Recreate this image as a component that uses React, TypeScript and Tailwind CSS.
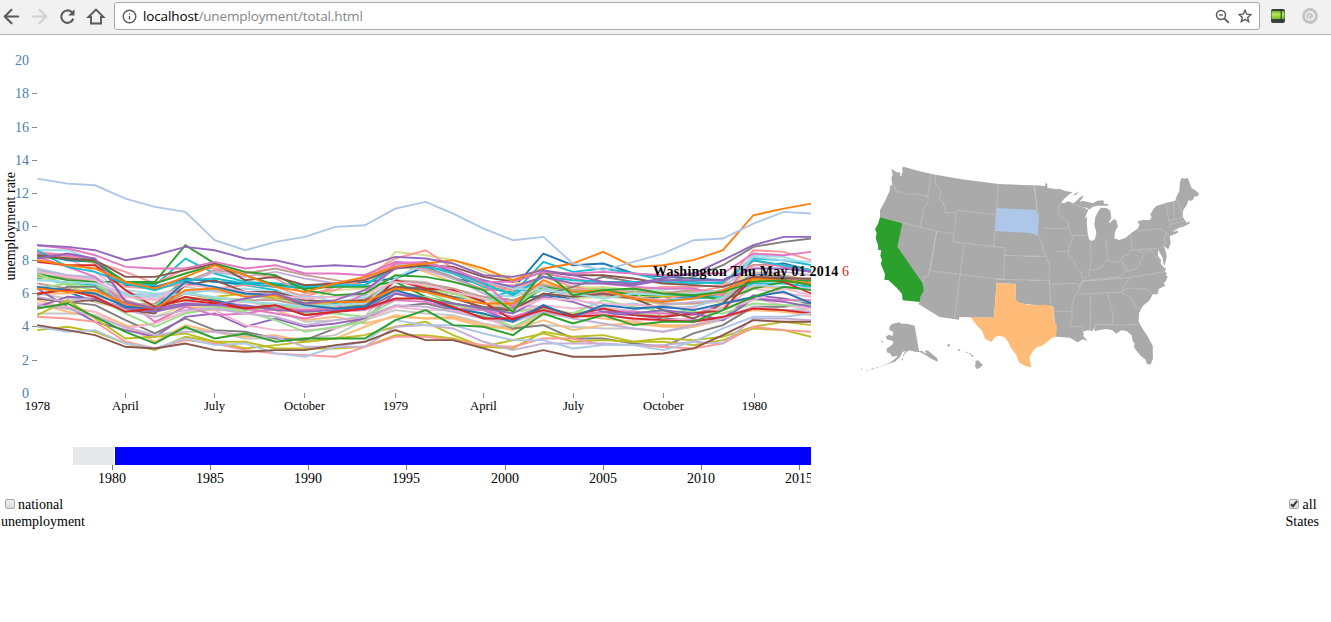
import { ArrowLeft, ArrowRight, Info } from "lucide-react";

type Series = [string, number[]];

const series: Series[] = [
  ["#f7b6d2", [8.1, 8.1, 7.3, 5.9, 5.7, 5.5, 5.3, 5.5, 5.2, 5.1, 5.2, 5.5, 6.1, 5.8, 5.3, 5.2, 4.9, 5.3, 5.1, 5.2, 4.9, 4.6, 4.8, 5.2, 6.3, 6.0, 5.8]],
  ["#1f77b4", [6.4, 6.1, 5.5, 5.1, 5.2, 5.7, 5.6, 5.2, 5.2, 5.3, 5.1, 5.2, 6.4, 6.3, 6.0, 5.8, 5.6, 5.9, 5.7, 5.9, 5.7, 5.8, 5.8, 5.9, 7.2, 7.0, 6.7]],
  ["#c7c7c7", [6.0, 5.7, 5.6, 5.2, 5.0, 5.2, 5.1, 5.1, 5.0, 4.3, 4.4, 4.6, 6.8, 6.7, 6.1, 5.8, 5.5, 6.2, 6.0, 6.1, 6.2, 6.0, 6.3, 5.9, 6.9, 6.8, 6.6]],
  ["#ffbb78", [6.0, 6.0, 6.1, 5.2, 5.1, 6.2, 6.3, 6.1, 5.8, 5.3, 5.4, 5.5, 7.8, 7.3, 6.7, 6.3, 6.1, 6.6, 6.3, 6.2, 6.1, 5.8, 6.0, 5.9, 6.4, 6.3, 6.3]],
  ["#17becf", [6.9, 6.6, 6.5, 5.3, 5.3, 6.9, 6.7, 6.5, 6.2, 5.5, 5.4, 5.3, 6.3, 6.1, 5.8, 5.6, 6.2, 6.2, 6.0, 5.8, 5.8, 5.6, 5.7, 5.8, 6.6, 6.6, 6.4]],
  ["#c7c7c7", [7.5, 6.8, 6.6, 6.0, 5.9, 6.4, 6.1, 5.9, 5.6, 5.2, 5.3, 5.7, 6.7, 6.4, 6.1, 5.8, 5.9, 6.4, 6.3, 6.1, 6.0, 6.1, 6.1, 6.0, 6.8, 6.8, 6.5]],
  ["#c7c7c7", [4.8, 4.8, 4.7, 3.9, 3.4, 3.9, 3.7, 3.3, 3.3, 3.3, 3.5, 4.4, 5.0, 4.8, 4.7, 4.2, 3.9, 4.1, 4.0, 3.9, 3.9, 3.7, 4.0, 4.4, 5.2, 5.0, 5.1]],
  ["#ffbb78", [5.6, 5.1, 4.9, 4.1, 3.1, 4.1, 3.7, 3.4, 3.5, 3.1, 3.3, 4.0, 4.7, 4.5, 4.6, 4.1, 3.8, 4.4, 3.8, 4.1, 4.2, 4.0, 4.0, 4.5, 5.2, 4.9, 4.7]],
  ["#ffbb78", [5.4, 4.9, 4.6, 4.0, 4.2, 5.2, 5.0, 5.0, 5.0, 4.4, 4.6, 4.2, 4.6, 4.5, 4.5, 4.0, 3.9, 4.7, 4.7, 4.5, 4.3, 4.1, 4.1, 4.6, 5.0, 4.9, 4.9]],
  ["#7f7f7f", [5.7, 5.5, 5.3, 4.4, 3.6, 4.5, 3.8, 3.7, 3.3, 3.2, 3.9, 4.5, 5.2, 5.4, 5.0, 4.6, 3.9, 4.1, 3.3, 3.3, 3.0, 2.8, 3.6, 4.1, 5.2, 5.2, 5.4]],
  ["#9467bd", [6.3, 5.2, 4.3, 3.8, 3.4, 4.6, 4.8, 4.0, 4.5, 4.0, 4.2, 4.5, 6.0, 5.7, 5.3, 5.0, 4.3, 5.1, 4.7, 4.8, 4.7, 4.5, 4.4, 4.5, 5.9, 5.7, 5.4]],
  ["#f7b6d2", [5.4, 5.2, 4.9, 3.9, 4.2, 4.9, 5.0, 4.1, 3.8, 3.8, 3.9, 4.4, 5.2, 5.0, 5.0, 4.5, 4.0, 4.8, 4.6, 4.8, 4.4, 4.4, 4.5, 5.0, 5.7, 5.3, 5.1]],
  ["#98df8a", [7.3, 6.5, 5.8, 4.8, 4.0, 4.8, 5.1, 4.9, 4.4, 3.7, 4.0, 4.3, 6.4, 6.1, 5.4, 4.7, 4.0, 4.9, 4.8, 5.6, 5.2, 4.9, 4.9, 4.8, 5.4, 5.3, 5.3]],
  ["#9edae5", [8.6, 8.6, 8.0, 6.2, 6.0, 6.0, 6.2, 6.3, 6.1, 5.9, 5.5, 5.8, 7.7, 7.8, 7.0, 6.0, 5.8, 6.4, 6.3, 5.9, 6.3, 6.2, 6.4, 6.5, 8.3, 8.2, 7.7]],
  ["#1f77b4", [8.4, 8.0, 7.9, 6.5, 6.4, 6.9, 6.7, 6.6, 6.6, 6.3, 6.5, 6.7, 6.9, 7.6, 6.9, 6.6, 6.3, 8.4, 7.7, 7.8, 7.2, 7.0, 6.9, 6.8, 7.7, 7.8, 7.4]],
  ["#17becf", [8.4, 8.2, 8.0, 6.6, 6.5, 8.1, 7.2, 6.7, 6.6, 6.5, 6.5, 6.5, 7.9, 7.7, 7.2, 6.4, 6.0, 7.9, 7.3, 7.5, 7.2, 6.8, 6.7, 6.6, 8.1, 8.0, 7.7]],
  ["#bcbd22", [7.0, 7.0, 6.6, 5.5, 5.2, 5.7, 5.8, 6.0, 5.7, 5.5, 5.2, 5.4, 6.2, 6.2, 6.0, 5.7, 5.2, 6.4, 6.4, 6.3, 5.9, 5.8, 5.9, 6.0, 6.8, 6.7, 6.6]],
  ["#dbdb8d", [6.8, 7.0, 6.7, 5.5, 5.1, 5.7, 5.8, 5.6, 5.6, 5.5, 6.2, 6.3, 8.5, 8.3, 8.0, 7.3, 6.7, 6.3, 5.7, 5.8, 5.7, 5.3, 5.4, 5.5, 8.0, 7.6, 7.3]],
  ["#dbdb8d", [7.1, 6.8, 5.5, 5.0, 4.6, 5.3, 5.2, 5.0, 5.1, 5.0, 5.2, 5.3, 6.3, 6.2, 6.0, 5.4, 5.1, 6.5, 6.3, 6.4, 6.2, 6.1, 6.0, 6.2, 7.3, 7.1, 6.8]],
  ["#c49c94", [6.6, 6.3, 5.9, 5.3, 5.4, 6.7, 7.4, 7.2, 7.5, 7.1, 6.8, 6.5, 7.6, 7.5, 7.0, 6.2, 6.3, 6.5, 6.2, 6.2, 6.1, 6.0, 6.2, 6.1, 7.1, 6.9, 6.8]],
  ["#c49c94", [7.1, 6.9, 6.7, 5.6, 5.1, 6.0, 5.7, 5.6, 5.6, 5.3, 5.5, 5.6, 6.8, 6.6, 6.3, 5.8, 5.6, 6.3, 6.0, 5.9, 5.7, 5.4, 5.4, 5.6, 7.0, 7.1, 6.7]],
  ["#ff9896", [8.4, 8.2, 7.9, 7.3, 6.6, 7.5, 7.5, 7.3, 6.9, 6.0, 6.2, 6.9, 7.8, 7.8, 7.3, 6.5, 6.5, 6.4, 5.9, 6.1, 5.8, 5.6, 6.1, 6.4, 7.7, 7.7, 7.4]],
  ["#ff9896", [8.5, 8.3, 7.8, 6.4, 6.3, 6.6, 6.3, 6.5, 6.4, 5.8, 6.4, 7.0, 8.1, 8.6, 7.5, 6.6, 6.2, 7.0, 6.4, 6.1, 6.2, 6.4, 6.4, 6.5, 8.6, 8.5, 8.0]],
  ["#2ca02c", [7.2, 6.8, 6.7, 6.7, 6.6, 7.2, 7.7, 7.1, 6.5, 6.3, 6.4, 6.4, 6.7, 5.8, 5.4, 5.1, 5.0, 6.4, 6.1, 6.2, 5.9, 5.9, 5.9, 5.6, 6.3, 6.7, 6.8]],
  ["#98df8a", [7.2, 6.5, 6.2, 5.9, 5.3, 6.1, 5.7, 5.6, 5.2, 5.2, 5.5, 5.1, 6.8, 6.4, 6.0, 5.7, 5.4, 6.3, 6.1, 6.3, 6.2, 4.5, 5.2, 5.8, 7.0, 6.8, 6.6]],
  ["#98df8a", [6.3, 6.6, 6.4, 6.0, 5.2, 5.4, 5.2, 5.0, 5.2, 4.8, 4.8, 4.6, 5.6, 5.8, 5.3, 5.0, 4.9, 5.1, 4.8, 5.1, 4.8, 4.6, 4.8, 5.1, 5.6, 5.6, 5.5]],
  ["#aec7e8", [7.5, 7.1, 7.0, 6.0, 5.9, 6.1, 6.2, 6.0, 5.9, 5.8, 5.8, 5.9, 7.6, 7.7, 7.3, 6.7, 6.4, 6.4, 5.7, 5.2, 5.4, 5.1, 5.2, 5.7, 6.5, 6.4, 6.3]],
  ["#c5b0d5", [7.4, 7.1, 6.9, 5.2, 5.0, 6.6, 7.3, 7.0, 7.3, 6.9, 6.6, 6.8, 7.7, 7.4, 6.9, 6.0, 5.3, 5.2, 4.6, 4.9, 5.0, 5.3, 5.5, 5.6, 7.2, 7.3, 7.1]],
  ["#7f7f7f", [5.9, 6.4, 6.4, 5.2, 5.0, 5.3, 5.3, 5.2, 5.1, 5.0, 5.1, 5.3, 6.3, 6.3, 5.7, 5.2, 5.1, 5.9, 6.4, 7.0, 6.7, 6.7, 7.0, 7.7, 8.8, 9.1, 9.3]],
  ["#e377c2", [8.2, 7.6, 7.0, 5.3, 5.1, 5.3, 5.3, 5.1, 4.8, 4.5, 4.9, 5.0, 5.6, 5.5, 5.1, 5.0, 4.6, 5.2, 4.7, 4.9, 4.9, 4.8, 4.7, 5.4, 5.7, 5.6, 5.6]],
  ["#e377c2", [8.4, 8.3, 8.1, 5.6, 4.3, 5.2, 4.7, 4.8, 5.1, 5.0, 5.1, 6.0, 7.8, 7.9, 7.4, 6.6, 5.2, 7.2, 6.9, 6.6, 6.4, 6.3, 6.3, 5.9, 8.0, 7.6, 7.3]],
  ["#d62728", [7.9, 7.7, 7.7, 6.2, 5.2, 5.6, 5.4, 5.1, 5.3, 4.7, 4.9, 5.1, 6.8, 6.3, 6.2, 5.5, 4.4, 5.2, 4.7, 5.1, 4.7, 4.6, 4.8, 5.0, 7.0, 6.7, 6.0]],
  ["#8c564b", [5.7, 5.5, 5.6, 5.0, 4.8, 6.5, 6.8, 6.1, 6.1, 5.6, 5.5, 5.6, 6.4, 6.2, 5.8, 5.1, 5.0, 6.0, 5.8, 6.0, 5.7, 5.0, 4.5, 5.4, 7.0, 6.8, 6.5]],
  ["#9467bd", [5.2, 5.8, 5.7, 5.1, 4.9, 5.3, 5.3, 5.3, 5.0, 4.9, 5.0, 5.1, 6.0, 5.6, 5.4, 5.1, 4.8, 5.8, 5.5, 4.9, 4.8, 5.0, 4.8, 4.4, 5.7, 5.5, 5.2]],
  ["#c5b0d5", [5.8, 5.5, 5.8, 5.0, 4.6, 5.0, 5.1, 4.8, 4.6, 4.1, 4.4, 4.6, 5.3, 5.2, 4.9, 4.5, 4.3, 4.9, 4.5, 4.2, 3.9, 3.7, 4.1, 4.5, 5.2, 5.0, 4.9]],
  ["#17becf", [8.6, 7.6, 7.3, 6.6, 6.2, 6.8, 6.9, 6.6, 6.4, 6.4, 6.5, 6.5, 7.6, 7.6, 7.3, 6.6, 5.9, 7.0, 6.8, 6.7, 6.7, 6.7, 6.6, 6.7, 8.0, 7.7, 7.4]],
  ["#9edae5", [6.8, 6.7, 6.6, 5.9, 5.8, 6.0, 5.8, 5.5, 5.4, 5.2, 5.3, 5.4, 6.9, 7.9, 7.4, 6.8, 6.3, 6.2, 6.0, 5.7, 6.0, 5.9, 6.0, 6.2, 8.2, 8.0, 7.9]],
  ["#f7b6d2", [7.3, 7.0, 6.8, 5.8, 5.6, 6.5, 6.4, 6.1, 5.9, 5.7, 5.8, 6.0, 6.7, 6.5, 6.1, 5.7, 5.0, 5.7, 5.6, 5.4, 5.3, 5.2, 5.1, 5.0, 5.6, 6.3, 5.9]],
  ["#1f77b4", [6.4, 6.2, 6.0, 5.2, 5.1, 6.7, 6.4, 6.0, 5.9, 5.3, 5.1, 5.2, 6.2, 5.7, 5.1, 4.8, 4.3, 5.3, 4.6, 5.3, 5.1, 5.2, 5.0, 5.4, 5.8, 6.1, 5.4]],
  ["#d62728", [6.0, 6.2, 5.8, 4.9, 5.1, 5.8, 5.5, 5.1, 5.3, 4.7, 4.9, 5.1, 5.7, 5.7, 5.2, 4.5, 4.5, 5.0, 4.6, 4.7, 4.5, 4.4, 4.3, 4.6, 5.1, 5.0, 4.8]],
  ["#ff7f0e", [6.3, 6.1, 6.2, 5.4, 5.1, 6.2, 6.3, 5.8, 5.9, 5.4, 5.5, 5.5, 6.3, 6.1, 5.7, 5.4, 5.4, 6.8, 6.1, 6.2, 5.7, 5.5, 5.7, 6.2, 6.9, 6.8, 6.6]],
  ["#2ca02c", [8.2, 8.1, 7.9, 6.7, 6.7, 8.9, 7.8, 7.3, 7.1, 6.2, 5.9, 6.0, 7.1, 7.0, 6.7, 6.2, 4.9, 7.4, 5.9, 6.2, 6.3, 6.0, 5.9, 6.1, 6.7, 6.8, 6.5]],
  ["#bcbd22", [4.7, 5.6, 4.5, 3.3, 3.4, 3.6, 3.1, 2.7, 2.9, 3.1, 3.3, 3.5, 4.0, 4.3, 3.5, 2.8, 3.2, 3.6, 3.1, 3.2, 3.1, 3.3, 3.2, 3.4, 4.0, 4.3, 4.1]],
  ["#bcbd22", [3.8, 4.0, 3.7, 3.0, 2.6, 3.4, 3.1, 3.1, 2.7, 2.7, 2.7, 2.8, 3.5, 3.5, 3.3, 2.8, 2.7, 3.7, 3.4, 3.5, 3.1, 3.1, 2.9, 3.2, 3.9, 3.8, 3.4]],
  ["#ff9896", [4.6, 4.5, 4.3, 3.1, 2.7, 3.2, 3.0, 2.6, 2.4, 2.3, 2.2, 2.8, 3.4, 3.4, 3.2, 2.9, 2.8, 3.3, 3.3, 2.9, 2.9, 2.8, 2.7, 3.0, 4.0, 3.8, 3.7]],
  ["#c5b0d5", [5.3, 5.1, 4.6, 4.0, 3.5, 3.7, 3.7, 3.5, 3.4, 2.8, 2.8, 2.8, 4.0, 4.1, 3.9, 3.1, 2.6, 3.0, 3.0, 3.0, 2.9, 2.9, 3.1, 3.0, 4.5, 4.5, 4.4]],
  ["#aec7e8", [4.0, 3.7, 3.8, 3.0, 2.7, 3.3, 2.9, 3.0, 2.4, 2.2, 2.8, 3.1, 4.4, 4.1, 4.1, 3.6, 3.2, 3.2, 2.7, 2.9, 2.9, 2.6, 3.1, 3.9, 4.6, 4.6, 4.8]],
  ["#2ca02c", [5.1, 5.4, 4.6, 3.7, 3.0, 4.0, 3.3, 3.6, 3.1, 3.3, 3.3, 3.3, 4.4, 5.0, 4.1, 4.0, 3.5, 4.8, 4.2, 4.7, 4.1, 4.3, 4.3, 5.0, 5.8, 6.4, 6.2]],
  ["#8c564b", [4.1, 3.8, 3.5, 2.8, 2.7, 3.0, 2.6, 2.5, 2.6, 2.6, 2.9, 3.1, 3.8, 3.2, 3.2, 2.7, 2.2, 2.6, 2.2, 2.2, 2.3, 2.4, 2.7, 3.5, 4.4, 4.3, 4.3]],
  ["#8c564b", [8.3, 8.1, 8.0, 7.0, 7.0, 7.4, 7.8, 6.8, 7.0, 6.5, 6.6, 6.8, 7.5, 7.7, 7.6, 7.0, 6.7, 7.3, 7.1, 7.1, 6.9, 6.6, 6.5, 6.4, 7.0, 6.9, 6.9]],
  ["#9467bd", [8.1, 8.4, 8.1, 5.5, 5.1, 5.4, 5.3, 5.7, 6.0, 5.4, 5.6, 6.2, 7.5, 7.9, 7.3, 6.8, 6.4, 7.0, 6.6, 6.6, 6.5, 6.8, 6.8, 6.8, 7.5, 7.5, 7.3]],
  ["#e377c2", [8.9, 8.7, 8.3, 7.6, 7.5, 7.5, 7.9, 7.5, 7.7, 7.2, 7.2, 7.1, 7.9, 7.8, 7.5, 6.7, 6.7, 7.3, 7.2, 7.3, 7.2, 7.1, 7.2, 7.2, 8.4, 8.3, 8.5]],
  ["#ff7f0e", [8.0, 7.7, 7.5, 6.7, 6.3, 7.0, 7.7, 7.1, 6.4, 6.1, 6.6, 7.0, 7.6, 7.8, 8.0, 7.5, 6.8, 7.5, 7.8, 8.5, 7.6, 7.7, 8.0, 8.6, 10.7, 11.1, 11.4]],
  ["#9467bd", [8.9, 8.8, 8.6, 8.0, 8.3, 8.8, 8.6, 8.1, 8.0, 7.6, 7.7, 7.6, 8.2, 8.1, 7.8, 7.1, 7.0, 7.4, 7.1, 6.7, 6.6, 6.9, 7.2, 8.0, 8.9, 9.4, 9.4]],
  ["#aec7e8", [12.9, 12.6, 12.5, 11.7, 11.2, 10.9, 9.2, 8.6, 9.1, 9.4, 10.0, 10.1, 11.1, 11.5, 10.8, 9.9, 9.2, 9.4, 7.8, 7.4, 7.9, 8.4, 9.2, 9.3, 10.2, 10.9, 10.8]],
];

const monthStarts = [0, 31, 59, 90, 120, 151, 181, 212, 243, 273, 304, 334];
const monthX = (i: number) => 37.2 + (monthStarts[i % 12] + 365 * Math.floor(i / 12)) * 0.981;
const rateY = (v: number) => 358.4 - v * 16.65;

const rates = [0, 2, 4, 6, 8, 10, 12, 14, 16, 18, 20];
const months: [number, string][] = [
  [37, "1978"], [125, "April"], [214, "July"], [304, "October"], [395, "1979"],
  [483, "April"], [573, "July"], [663, "October"], [754, "1980"],
];
const years: [number, string][] = [
  [112, "1980"], [210, "1985"], [308, "1990"], [406, "1995"],
  [505, "2000"], [603, "2005"], [701, "2010"], [799, "2015"],
];

function Toolbar() {
  return (
    <header className="flex h-[35px] shrink-0 items-start border-b border-[#b4b4b4] bg-[#f1f1f1]">
      <nav className="flex h-8 w-[114px] shrink-0 items-center gap-[5px]">
        <ArrowLeft className="shrink-0" size={23} strokeWidth={2.2} color="#5a5a5a" />
        <ArrowRight className="shrink-0" size={23} strokeWidth={2.2} color="#d0d0d0" />
        <svg className="shrink-0" width="23" height="23" viewBox="-2.5 -2.5 23 23" fill="none">
          <path d="M14.800 11.200A6.200 6.200 0 1 1 13.200 4.600L14.600 6.200" stroke="#5a5a5a" strokeWidth="2.100" />
          <path d="M16 1.800v6.200H9.800z" fill="#5a5a5a" />
        </svg>
        <svg className="shrink-0" width="23" height="23" viewBox="-3 -2.5 23 23" fill="none" stroke="#5a5a5a" strokeWidth="1.900">
          <path d="M1.500 9.500 9 2l7.500 7.500H14V16H4V9.500z" />
        </svg>
      </nav>
      <div className="mt-[2px] flex h-7 w-[1146px] items-center rounded-[3px] border border-[#a8a8a8] bg-white px-[7px]">
        <Info size={15} strokeWidth={2.300} color="#5a5a5a" />
        <span className="mt-px ml-[6px] flex-1 whitespace-nowrap font-['Open_Sans','Noto_Sans',sans-serif] text-[13.500px] leading-none tracking-[-0.13px] text-[#858585]">
          <span className="text-black">localhost</span>/unemployment/total.html
        </span>
        <svg width="15" height="15" viewBox="0 0 15 15" fill="none" stroke="#5a5a5a">
          <circle cx="6" cy="6" r="4.500" strokeWidth="1.500" />
          <path d="M4 6h4" strokeWidth="1.300" />
          <path d="m9.300 9.300 4.500 4.500" strokeWidth="1.800" />
        </svg>
        <svg className="ml-2" width="14" height="14" viewBox="0 0 14 14" fill="none" stroke="#5a5a5a" strokeWidth="1.400">
          <path d="m7 1.300 1.700 3.900 4.200.4-3.200 2.800 1 4.200L7 10.400l-3.700 2.200 1-4.200L1.100 5.600l4.200-.4z" />
        </svg>
      </div>
      <svg className="ml-[10px] mt-2" width="16" height="16" viewBox="0 0 16 16">
        <defs>
          <linearGradient id="green" x2="0" y2="1">
            <stop stopColor="#74ad35" />
            <stop offset=".4" stopColor="#b4ea5c" />
            <stop offset="1" stopColor="#78bd2a" />
          </linearGradient>
        </defs>
        <rect x="1" y="1" width="14" height="14" rx="2" fill="#3a4143" />
        <rect x="1.500" y="3" width="13" height="8" fill="url(#green)" />
        <path d="M11.200 1v14" stroke="#25330f" />
      </svg>
      <svg className="ml-4 mt-2" width="16" height="16" viewBox="0 0 16 16" fill="none" stroke="#c2c2c2">
        <circle cx="8" cy="8" r="6.500" strokeWidth="2.800" />
        <path d="M6.400 10.200A2.500 2.500 0 1 1 9.800 9.500M8.300 7.500v4" strokeWidth="1.800" />
      </svg>
    </header>
  );
}

function RateChart() {
  return (
    <svg className="block shrink-0 overflow-visible font-['Liberation_Serif',serif]" width="811" height="388">
      <defs>
        <clipPath id="plot"><rect x="37" y="0" width="774" height="360" /></clipPath>
      </defs>
      <g fontSize="14" fill="#4c7eae" textAnchor="end">
        {rates.map((r) => (
          <text key={r} x="29" y={rateY(r) + 4.5}>{r}</text>
        ))}
      </g>
      <g stroke="#888" shapeRendering="crispEdges">
        {rates.filter((r) => r > 0 && r < 20).map((r) => (
          <path key={r} d={`M32 ${Math.floor(rateY(r)) + 0.5}h5`} />
        ))}
        {months.filter(([x]) => x > 37).map(([x]) => (
          <path key={x} d={`M${x + 0.5} 358v5`} />
        ))}
      </g>
      <text transform="translate(15 245.500) rotate(-90)" fontSize="14">unemployment rate</text>
      <g clipPath="url(#plot)" fill="none" strokeWidth="1.900">
        {series.map(([color, values], i) => (
          <polyline key={i} stroke={color} points={values.map((v, m) => `${monthX(m)},${rateY(v)}`).join(" ")} />
        ))}
      </g>
      <g fontSize="12.700" textAnchor="middle">
        {months.map(([x, label]) => (
          <text key={x} x={x + 0.5} y="375">{label}</text>
        ))}
      </g>
      <text x="653" y="241" fontSize="14" fontWeight="bold" textLength="196" lengthAdjust="spacing">
        Washington Thu May 01 2014<tspan fontWeight="normal" fill="#e32020" dx="3.500">6</tspan>
      </text>
    </svg>
  );
}

function StateMap() {
  return (
    <svg className="ml-[39px] block shrink-0" width="360" height="388" viewBox="0 -345 1080 1164" strokeLinejoin="round">
      <g fill="#aaa">
        <path d="M124 56 138 65 152 69 149 78 155 76 158 63 156 54 161 50 203 62 245 72 330 87 445 102 575 107V467L510 460 496 450 497 402 440 399 432 503 328 501 327 509 269 501 205 462 209 456 190 440 128 300 100 240 90 202 90 180 104 155 118 125 121 105 127 106 124 85 128 74Z" />
        <path d="M118 530 126 522 147 517 155 521 172 521 194 527 207 603 217 603 225 610 238 606 262 625 263 635 246 628 228 616 211 607 194 605 178 601 166 609 157 625 162 610 168 602 157 606 151 620 135 635 111 643 82 653 122 637 140 622 142 617 127 620 119 609 112 608 109 597 121 588 129 582 129 573 110 568 108 560 116 554 128 558 130 546 118 540Z" />
        <path d="m90 570 10 6-2 3zM153 630l7-6-1 7zM78 654l7-4-2 5zM60 658l13-4-2 4zM47 660l9 0-3 2zM32 655l5 1-1 4zM224 603l9-2 14 13-8 2z" />
        <path d="m291 585 6-3 4 4-4 5zM324 598l4-1 4 6-5 1zM344 605l10 1-1 3zM357 609l4 0 2 4-4 1zM362 614l7 1 3 4-7 1zM376 633l8-2 15 14-10 8-8 5-6-9 2-9z" />
        <g transform="translate(510 30)">
          <path d="M0 76 75 78 77 69 82 71 82 83 110 88 118 86 136 93 158 97 148 103 132 117 123 128 133 130 143 124 153 127 164 132 176 125 187 130 175 137 194 143 205 150 198 166 195 176 202 170 200 185 203 220 207 238 215 243 225 238 229 217 223 194 226 171 235 154 242 143 260 144 271 152 274 174 266 188 272 187 280 178 289 180 294 200 288 208 285 216 283 235 298 240 317 233 335 218 352 207 359 195 352 184 370 180 388 181 395 173 391 163 402 145 409 138 437 129 466 122 470 109 478 94 480 65 485 54 494 56 503 53 515 85 525 90 538 102 530 110 524 108 518 121 510 123 507 118 500 135 490 150 488 169 494 180 501 189 507 184 510 190 490 200 475 204 458 216 474 212 474 218 449 229 452 250 445 268 431 259 437 273 440 290 434 318 430 308 427 292 418 275 415 267 414 287 424 302 421 309 431 322 438 326 435 335 440 339 438 347 443 349 438 363 431 370 436 377 417 386 412 403 398 403 389 421 368 438 357 460 356 485 370 510 382 527 398 557 399 595 392 614 380 611 377 599 362 587 350 573 342 561 344 550 338 544 335 526 320 513 303 511 289 521 277 511 260 507 235 511 225 514 222 504 218 513 202 511 187 516 192 521 190 528 203 543 188 538 173 547 161 540 150 533 130 532 108 530 100 440 0 428Z" />
          <path d="M176 128 187 122 205 126 219 130 232 122 250 121 252 131 265 133 265 137 247 137 232 137 218 140 208 149 200 143 184 141 169 136 151 134 165 127 180 112 191 106 187 115ZM157 106l22-12-11 11z" />
        </g>
      </g>
      <g fill="none" stroke="#ccc" strokeWidth="1.600" strokeDasharray="15 .8">
        <path d="M121 105 134 109 139 126 155 126 167 133 200 132 233 139 244 73M233 139 236 151 222 175 211 229M90 202 260 244 311 251M257 75 256 99 273 126 268 148 279 157 288 189 312 187 319 192 321 181 439 194M319 192 309 275 433 290M260 244 241 362 443 387 463 388M260 244 235 378 222 382 219 402M342 284 313 506M445 102 431 290 465 293 461 388 440 387 440 399 497 402M553 108 562 180M462 316 570 319M461 388 570 391" />
        <g transform="translate(510 30)">
          <path d="M43 78 51 147 55 160 53 220 66 252 69 272 79 290 88 313 88 372 92 411 91 438M69 205 142 205M109 274 144 274M15 289 76 289M25 361 88 361 88 373 172 370 180 381 190 364M123 128 116 141 115 161 130 174 144 187 146 207 160 231 151 250 144 273 148 290 163 302 166 321 183 337 188 358 181 372 175 394 163 410 155 447 157 467 149 499 187 500 191 518M102 454H157M160 226 204 226M212 243 213 306 205 348 193 356M258 237 263 299 273 306 300 305 307 290 324 283 336 263 331 221M353 213 420 206 439 219 431 238 438 249 425 265M335 270 414 265M263 299 245 321 214 333M307 304 312 328 330 334 352 324 370 286 391 273M352 273 370 278 390 267 403 284 417 300M307 304 325 330 299 350 186 363M186 364 327 353 434 335M175 403 303 396 328 353M303 396 328 409 347 439 363 448M303 396 325 384 353 386 378 388 400 405M212 405 211 510M262 401 279 462 278 495 353 494M228 507 224 492 278 495M437 129 447 182 451 206M460 124 462 178M450 193 490 184 487 179M447 182 488 173M470 119 490 166M154 132 196 144 198 158M485 192v10M454 213 475 207M438 223 449 228" />
        </g>
      </g>
      <path fill="#2ca02c" d="M90 202 157 220 142 290 218 400 221 422 211 440 209 456 158 451 156 432 140 413 128 402 116 391 103 389 105 372 96 351 92 340 96 331 91 317 94 300 85 300 84 285 77 265 80 250 75 237 84 222Z" />
      <path fill="#aec7e8" d="M440 174 560 180 558 186 566 192 563 258 550 252 535 249 435 243 Z" />
      <path fill="#ffbb78" d="M440 399 497 402 496 450 510 458 535 464 560 466 590 464 611 473 612 510 621 527 618 560 605 564 592 575 575 588 560 592 549 603 538 622 544 652 527 649 507 637 499 615 483 594 473 573 463 561 445 557 435 562 424 576 405 566 397 544 379 524 362 501 432 503Z" />
    </svg>
  );
}

function RangeBrush() {
  return (
    <svg className="block h-[67px] w-[811px] font-['Liberation_Serif',serif]">
      <rect x="73" y="24" width="41" height="18" fill="#e6e7e8" />
      <rect x="115" y="24" width="696" height="18" fill="#00f" />
      <g fontSize="14" textAnchor="middle">
        {years.map(([x, label]) => (
          <g key={x}>
            <path d={`M${x + 0.5} 42v5`} stroke="#777" />
            <text x={x} y="60">{label}</text>
          </g>
        ))}
      </g>
    </svg>
  );
}

function CheckToggle({ checked = false }: { checked?: boolean }) {
  return (
    <span
      role="checkbox"
      aria-checked={checked}
      className="-mt-px inline-flex size-[10px] items-center justify-center rounded-[2px] border border-[#aaa] bg-linear-to-b from-[#eee] to-[#ddd]"
    >
      {checked && (
        <svg width="8" height="8" viewBox="0 0 8 8" fill="none" stroke="#333" strokeWidth="2">
          <path d="m1 4.200 2 2L7 1" />
        </svg>
      )}
    </span>
  );
}

export default function App() {
  return (
    <div className="flex h-[622px] w-[1331px] flex-col overflow-hidden bg-white font-['Liberation_Serif',serif] text-black">
      <Toolbar />
      <main>
        <div className="flex">
          <RateChart />
          <StateMap />
        </div>
        <RangeBrush />
        <div className="flex justify-between pl-px pr-[12px] pt-[6px] text-[14px] leading-[17px]">
          <div>
            <div className="flex items-center gap-[3px] pl-1"><CheckToggle />national</div>
            <div>unemployment</div>
          </div>
          <div>
            <div className="flex items-center gap-1 pl-[3px]"><CheckToggle checked />all</div>
            <div>States</div>
          </div>
        </div>
      </main>
    </div>
  );
}
